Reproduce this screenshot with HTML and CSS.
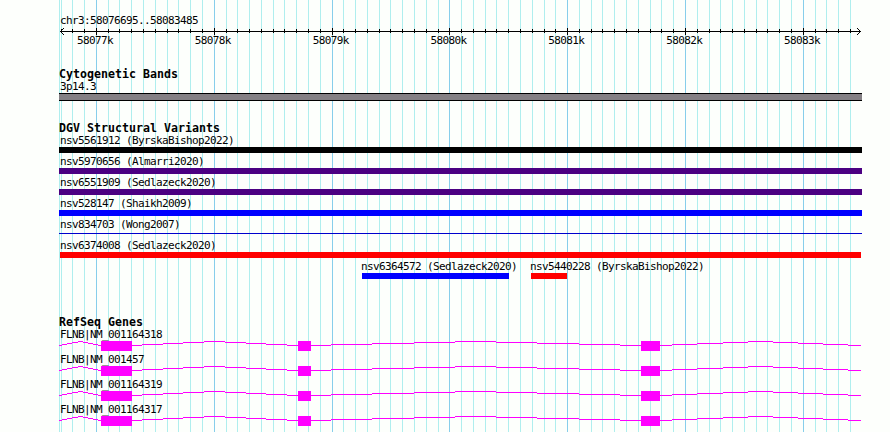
FILE: index.html
```html
<!DOCTYPE html>
<html lang="en">
<head>
    <meta charset="UTF-8">
    <title>chr3:58076695..58083485</title>
    <link rel="stylesheet" href="styles.css">
</head>
<body>
    <div class="browser">
        <svg class="grid" width="890" height="432">
            <path class="minor" d="M59.5 0V432M61.5 0V432M72.5 0V432M84.5 0V432M108.5 0V432M119.5 0V432M131.5 0V432M143.5 0V432M155.5 0V432M167.5 0V432M178.5 0V432M190.5 0V432M202.5 0V432M226.5 0V432M237.5 0V432M249.5 0V432M261.5 0V432M273.5 0V432M284.5 0V432M296.5 0V432M308.5 0V432M320.5 0V432M343.5 0V432M355.5 0V432M367.5 0V432M379.5 0V432M390.5 0V432M402.5 0V432M414.5 0V432M426.5 0V432M438.5 0V432M461.5 0V432M473.5 0V432M485.5 0V432M496.5 0V432M508.5 0V432M520.5 0V432M532.5 0V432M544.5 0V432M555.5 0V432M579.5 0V432M591.5 0V432M602.5 0V432M614.5 0V432M626.5 0V432M638.5 0V432M650.5 0V432M661.5 0V432M673.5 0V432M697.5 0V432M709.5 0V432M720.5 0V432M732.5 0V432M744.5 0V432M756.5 0V432M767.5 0V432M779.5 0V432M791.5 0V432M815.5 0V432M826.5 0V432M838.5 0V432M850.5 0V432"/>
            <path class="major" d="M96.5 0V432M214.5 0V432M332.5 0V432M449.5 0V432M567.5 0V432M685.5 0V432M803.5 0V432"/>
        </svg>

        <div class="tracks">
            <div class="ruler">
                <div class="label">chr3:58076695..58083485</div>
                <svg class="axis" width="803" height="7" viewBox="59 28 803 7">
                    <path d="M60 31.5H861"/>
                    <path d="M61.5 29V33M72.5 29V33M84.5 29V33M108.5 29V33M119.5 29V33M131.5 29V33M143.5 29V33M155.5 29V33M167.5 29V33M178.5 29V33M190.5 29V33M202.5 29V33M226.5 29V33M237.5 29V33M249.5 29V33M261.5 29V33M273.5 29V33M284.5 29V33M296.5 29V33M308.5 29V33M320.5 29V33M343.5 29V33M355.5 29V33M367.5 29V33M379.5 29V33M390.5 29V33M402.5 29V33M414.5 29V33M426.5 29V33M438.5 29V33M461.5 29V33M473.5 29V33M485.5 29V33M496.5 29V33M508.5 29V33M520.5 29V33M532.5 29V33M544.5 29V33M555.5 29V33M579.5 29V33M591.5 29V33M602.5 29V33M614.5 29V33M626.5 29V33M638.5 29V33M650.5 29V33M661.5 29V33M673.5 29V33M697.5 29V33M709.5 29V33M720.5 29V33M732.5 29V33M744.5 29V33M756.5 29V33M767.5 29V33M779.5 29V33M791.5 29V33M815.5 29V33M826.5 29V33M838.5 29V33M850.5 29V33"/>
                    <path d="M96.5 28V35M214.5 28V35M332.5 28V35M449.5 28V35M567.5 28V35M685.5 28V35M803.5 28V35"/>
                    <path d="M61 30.5H62M62 29.5H63M63 28.5H64M61 32.5H62M62 33.5H63M63 34.5H64"/>
                    <path d="M859 30.5H860M858 29.5H859M857 28.5H858M859 32.5H860M858 33.5H859M857 34.5H858"/>
                </svg>
                <div class="ticks">
                    <span>58077k</span>
                    <span>58078k</span>
                    <span>58079k</span>
                    <span>58080k</span>
                    <span>58081k</span>
                    <span>58082k</span>
                    <span>58083k</span>
                </div>
            </div>

            <div class="track cytobands">
                <h2>Cytogenetic Bands</h2>
                <div class="label">3p14.3</div>
                <div class="band"></div>
            </div>

            <div class="track variants">
                <h2>DGV Structural Variants</h2>
                <div class="row">
                    <div class="label">nsv5561912 (ByrskaBishop2022)</div>
                    <div class="bar black"></div>
                </div>
                <div class="row">
                    <div class="label">nsv5970656 (Almarri2020)</div>
                    <div class="bar purple"></div>
                </div>
                <div class="row">
                    <div class="label">nsv6551909 (Sedlazeck2020)</div>
                    <div class="bar purple"></div>
                </div>
                <div class="row">
                    <div class="label">nsv528147 (Shaikh2009)</div>
                    <div class="bar blue"></div>
                </div>
                <div class="row">
                    <div class="label">nsv834703 (Wong2007)</div>
                    <div class="bar thin"></div>
                </div>
                <div class="row">
                    <div class="label">nsv6374008 (Sedlazeck2020)</div>
                    <div class="bar red inset"></div>
                </div>
                <div class="row partial">
                    <div class="loss">
                        <div class="label">nsv6364572 (Sedlazeck2020)</div>
                        <div class="bar blue"></div>
                    </div>
                    <div class="gain">
                        <div class="label">nsv5440228 (ByrskaBishop2022)</div>
                        <div class="bar red"></div>
                    </div>
                </div>
            </div>

            <div class="track genes">
                <h2>RefSeq Genes</h2>
                <div class="row">
                    <div class="label">FLNB|NM_001164318</div>
                    <svg class="gene" width="803" height="10" viewBox="59 0 803 10">
                        <g id="transcript">
                            <path d="M59 4.5H62M62 3.5H67M67 2.5H72M72 1.5H78M78 .5H83M83 1.5H88M88 2.5H93M93 3.5H98M98 4.5H101"/>
                            <path d="M132 4.5H142M142 3.5H163M163 2.5H183M183 1.5H204M204 .5H225M225 1.5H246M246 2.5H266M266 3.5H287M287 4.5H298"/>
                            <path d="M311 4.5H331M331 3.5H372M372 2.5H414M414 1.5H455M455 .5H496M496 1.5H537M537 2.5H579M579 3.5H620M620 4.5H641"/>
                            <path d="M660 4.5H672M672 3.5H697M697 2.5H723M723 1.5H748M748 .5H773M773 1.5H798M798 2.5H823M823 3.5H848M848 4.5H861"/>
                            <rect x="101" y="0" width="31" height="10"/>
                            <rect x="298" y="0" width="13" height="10"/>
                            <rect x="641" y="0" width="19" height="10"/>
                        </g>
                    </svg>
                </div>
                <div class="row">
                    <div class="label">FLNB|NM_001457</div>
                    <svg class="gene" width="803" height="10" viewBox="59 0 803 10"><use href="#transcript"/></svg>
                </div>
                <div class="row">
                    <div class="label">FLNB|NM_001164319</div>
                    <svg class="gene" width="803" height="10" viewBox="59 0 803 10"><use href="#transcript"/></svg>
                </div>
                <div class="row">
                    <div class="label">FLNB|NM_001164317</div>
                    <svg class="gene" width="803" height="10" viewBox="59 0 803 10"><use href="#transcript"/></svg>
                </div>
            </div>
        </div>
    </div>
</body>
</html>
```
FILE: styles.css
```css
body {
    margin: 0;
    background-color: #fdfffc;
    color: #000;
    font-family: "DejaVu Sans Mono", monospace;
    font-size: 11px;
}
svg {
    display: block;
    fill: none;
    shape-rendering: crispEdges;
}
.browser {
    position: relative;
    width: 890px;
    height: 432px;
    overflow: hidden;
}
.grid {
    position: absolute;
    top: 0;
    left: 0;
}
.minor {
    stroke: #afeeee;
}
.major {
    stroke: #87ceeb;
}
.tracks {
    position: relative;
    width: 803px;
    margin-left: 59px;
    padding-top: 15px;
}
.label {
    position: relative;
    z-index: 1;
    height: 12px;
    margin-left: 1px;
    line-height: 12px;
    letter-spacing: -0.622px;
    white-space: nowrap;
}
h2 {
    height: 13px;
    margin: 0;
    font-size: 11.6px;
    line-height: 13px;
    letter-spacing: 0.016px;
}
.axis {
    margin-top: 1px;
    stroke: #000;
}
.ticks {
    display: flex;
    justify-content: space-between;
    width: 743px;
    height: 12px;
    margin-left: 18px;
    line-height: 12px;
    letter-spacing: -0.622px;
}
.cytobands {
    margin-top: 21px;
}
.band {
    height: 6px;
    border: solid #000;
    border-width: 1px 0;
    background-color: #848084;
}
.variants {
    margin-top: 21px;
}
.genes {
    margin-top: 34px;
}
.row {
    padding-bottom: 3px;
}
.bar {
    height: 6px;
}
.black {
    background-color: #000;
}
.purple {
    background-color: #4b0082;
}
.blue {
    background-color: #00f;
}
.red {
    background-color: #f00;
}
.thin {
    height: 1px;
    margin: 2px 0 3px;
    background-color: #0000cd;
}
.inset {
    margin: 0 1px;
}
.partial {
    display: flex;
    gap: 22px;
    padding-left: 303px;
}
.partial .label {
    margin-left: -1px;
}
.loss {
    width: 147px;
}
.gain {
    width: 36px;
}
.gene {
    fill: #f0f;
    stroke: #f0f;
}
.gene rect {
    stroke: none;
}
```
